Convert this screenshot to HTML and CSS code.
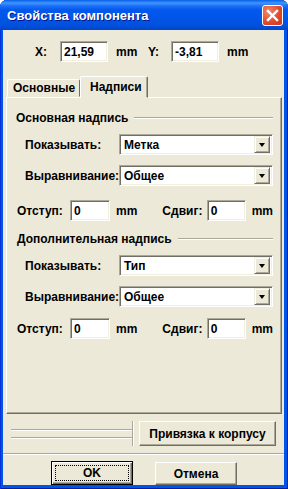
FILE: index.html
```html
<!DOCTYPE html>
<html lang="ru">
<head>
    <meta charset="UTF-8">
    <title>Свойства компонента</title>
    <link rel="stylesheet" href="styles.css">
</head>
<body>
<div class="window">
    <div class="titlebar">
        <span class="title">Свойства компонента</span>
        <div class="close">
            <svg width="13" height="13" viewBox="0 0 13 13"><path d="M2 2 L11 11 M11 2 L2 11" stroke="#fff" stroke-width="2.4" stroke-linecap="square"/></svg>
        </div>
    </div>
    <div class="client">
        <div class="coords">
            <span class="lbl-x">X:</span>
            <div class="edit coord">21,59</div>
            <span class="unit unit-x">mm</span>
            <span class="lbl-y">Y:</span>
            <div class="edit coord">-3,81</div>
            <span class="unit">mm</span>
        </div>

        <div class="tabs">
            <div class="tab">Основные</div>
            <div class="tab active">Надписи</div>
        </div>

        <div class="panel">
            <div class="group-title first"><span>Основная надпись</span><i></i></div>
            <div class="field"><span class="flabel">Показывать:</span><div class="combo">Метка<span class="drop"></span></div></div>
            <div class="field gap10"><span class="flabel">Выравнивание:</span><div class="combo">Общее<span class="drop"></span></div></div>
            <div class="offsets">
                <span class="olabel">Отступ:</span><div class="edit small">0</div><span class="ounit">mm</span>
                <span class="slabel">Сдвиг:</span><div class="edit small2">0</div><span class="ounit2">mm</span>
            </div>

            <div class="group-title second"><span>Дополнительная надпись</span><i></i></div>
            <div class="field"><span class="flabel">Показывать:</span><div class="combo">Тип<span class="drop"></span></div></div>
            <div class="field gap10"><span class="flabel">Выравнивание:</span><div class="combo">Общее<span class="drop"></span></div></div>
            <div class="offsets last">
                <span class="olabel">Отступ:</span><div class="edit small">0</div><span class="ounit">mm</span>
                <span class="slabel">Сдвиг:</span><div class="edit small2">0</div><span class="ounit2">mm</span>
            </div>
        </div>

        <div class="bind-row">
            <div class="etched"><div class="bars"></div></div>
            <div class="btn bind">Привязка к корпусу</div>
        </div>
        <div class="separator"></div>
        <div class="buttons">
            <div class="btn default"><span class="focus">OK</span></div>
            <div class="btn cancel">Отмена</div>
        </div>
    </div>
</div>
</body>
</html>
```

FILE: styles.css
```css
body {
    margin: 0;
    font-family: "Liberation Sans", Arial, sans-serif;
    font-weight: bold;
    font-size: 12px;
    color: #000;
}
.window {
    width: 288px;
    height: 489px;
    background: #0055e5;
    border-radius: 7px 7px 0 0;
    box-sizing: border-box;
    box-shadow: inset 1px 0 #0831d9, inset -1px 0 #001ea0, inset 0 -1px #001ea0;
}
.titlebar {
    height: 30px;
    display: flex;
    align-items: center;
    border-radius: 7px 7px 0 0;
    background: linear-gradient(#0a5fe8 0, #3d95ff 3px, #1e6ff5 6px, #0058ee 10px, #0055e6 20px, #0050dc 26px, #0046c8 30px);
}
.title {
    margin-left: 7px;
    color: #fff;
    font-size: 13px;
    text-shadow: 1px 1px #0f1089;
    flex: 1;
}
.close {
    width: 19px;
    height: 19px;
    margin-right: 5px;
    border: 1px solid #fff;
    border-radius: 3px;
    background: radial-gradient(circle at 30% 30%, #f08a6a, #e0472a 60%, #c8361b);
    display: flex;
    align-items: center;
    justify-content: center;
}
.client {
    margin: 0 4px 0 3px;
    height: 455px;
    background: #ece9d8;
}

/* sunken edit */
.edit, .combo {
    height: 21px;
    box-sizing: border-box;
    background: #fff;
    border: 1px solid;
    border-color: #aca899 #fff #fff #aca899;
    box-shadow: inset 1px 1px #716f64, inset -1px -1px #f1efe2;
    padding: 0 3px;
    display: flex;
    align-items: center;
}

.coords {
    display: flex;
    align-items: center;
    padding: 11px 0 0 32px;
    height: 21px;
}
.lbl-x { width: 25px; }
.lbl-y { width: 23px; }
.coord { width: 48px; }
.unit { margin-left: 8px; }
.unit-x { width: 32px; }

.tabs {
    display: flex;
    align-items: flex-end;
    margin: 14px 0 0 4px;
    height: 21px;
}
.tab {
    height: 18px;
    box-sizing: border-box;
    width: 73px;
    border: 1px solid;
    border-color: #fff #716f64 transparent #fff;
    border-radius: 2px 2px 0 0;
    padding-left: 5px;
    display: flex;
    align-items: center;
}
.tab.active {
    width: 68px;
    height: 22px;
    margin-bottom: -1px;
    padding-left: 9px;
    background: #ece9d8;
    position: relative;
    z-index: 1;
    box-shadow: inset -1px 0 #aca899;
}

.panel {
    margin: 0 2px 0 3px;
    height: 317px;
    box-sizing: border-box;
    border: 1px solid;
    border-color: #fff #716f64 #716f64 #fff;
    box-shadow: inset -1px -1px #aca899;
    padding: 10px 8px 0 0;
}
.group-title {
    display: flex;
    align-items: center;
    height: 20px;
    padding-left: 9px;
}
.group-title.second { margin-top: 8px; padding-left: 10px; }
.group-title i {
    flex: 1;
    margin-left: 6px;
    height: 0;
    border-top: 1px solid #aca899;
    border-bottom: 1px solid #fff;
}
.field {
    display: flex;
    align-items: center;
    margin-top: 6px;
    padding-left: 18px;
}
.field.gap10 { margin-top: 10px; }
.flabel { width: 94px; }
.combo {
    width: 154px;
    padding-left: 4px;
    justify-content: space-between;
    padding-right: 2px;
}
.drop {
    width: 16px;
    height: 17px;
    box-sizing: border-box;
    background: #ece9d8;
    border: 1px solid;
    border-color: #f1efe2 #716f64 #716f64 #f1efe2;
    box-shadow: inset 1px 1px #fff, inset -1px -1px #aca899;
    position: relative;
}
.drop::after {
    content: "";
    position: absolute;
    left: 4px;
    top: 6px;
    border-left: 3.5px solid transparent;
    border-right: 3.5px solid transparent;
    border-top: 4px solid #000;
}
.offsets {
    display: flex;
    align-items: center;
    margin-top: 14px;
    padding-left: 10px;
}
.offsets.last { margin-top: 11px; }
.olabel { width: 55px; }
.small { width: 41px; }
.ounit { margin-left: 6px; width: 48px; }
.slabel { width: 46px; }
.small2 { width: 40px; }
.ounit2 { margin-left: 6px; }

.btn {
    box-sizing: border-box;
    background: #ece9d8;
    border: 1px solid;
    border-color: #fff #716f64 #716f64 #fff;
    box-shadow: inset -1px -1px #aca899;
    display: flex;
    align-items: center;
    justify-content: center;
}
.bind-row {
    display: flex;
    margin-top: 7px;
    height: 25px;
}
.etched {
    margin-left: 8px;
    width: 121px;
    border-right: 1px solid #aca899;
    box-shadow: 1px 0 #fff;
    display: flex;
    align-items: center;
}
.bars {
    flex: 1;
    height: 7px;
    border-top: 1px solid #aca899;
    border-bottom: 1px solid #aca899;
    box-shadow: inset 0 1px #fff, 0 1px #fff;
}
.bind {
    margin-left: 6px;
    width: 137px;
    height: 25px;
}
.separator {
    margin-top: 7px;
    height: 0;
    border-top: 1px solid #aca899;
    border-bottom: 1px solid #fff;
}
.buttons {
    display: flex;
    padding-left: 48px;
    margin-top: 6px;
}
.buttons .btn {
    width: 82px;
    height: 24px;
}
.btn.default {
    border: 1px solid #000;
    box-shadow: inset 1px 1px #fff, inset -1px -1px #716f64, inset -2px -2px #aca899;
    padding: 3px;
}
.focus {
    flex: 1;
    align-self: stretch;
    border: 1px dotted #000;
    display: flex;
    align-items: center;
    justify-content: center;
}
.btn.cancel {
    margin-left: 22px;
    height: 23px;
    margin-top: 1px;
}
```
